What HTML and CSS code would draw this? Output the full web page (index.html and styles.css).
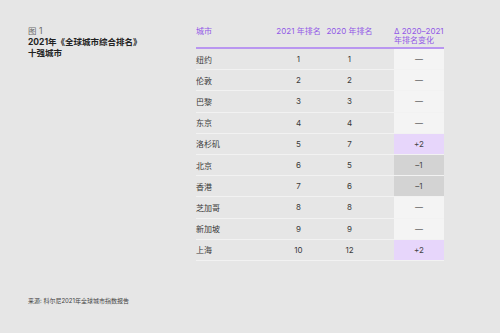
FILE: index.html
```html
<!DOCTYPE html>
<html lang="zh">
<head>
<meta charset="utf-8">
<link rel="stylesheet" href="styles.css">
</head>
<body>
<div class="page">
  <div class="main">
    <div class="caption">
      <div class="fig">图 1</div>
      <div class="title">2021年《全球城市综合排名》<br>十强城市</div>
    </div>
    <div class="table">
      <div class="row head">
        <div class="c city">城市</div>
        <div class="c num">2021 年排名</div>
        <div class="c num">2020 年排名</div>
        <div class="c delta">Δ 2020–2021<br>年排名变化</div>
      </div>
      <div class="row"><div class="c city">纽约</div><div class="c num">1</div><div class="c num">1</div><div class="c delta">—</div></div>
      <div class="row"><div class="c city">伦敦</div><div class="c num">2</div><div class="c num">2</div><div class="c delta">—</div></div>
      <div class="row"><div class="c city">巴黎</div><div class="c num">3</div><div class="c num">3</div><div class="c delta">—</div></div>
      <div class="row"><div class="c city">东京</div><div class="c num">4</div><div class="c num">4</div><div class="c delta">—</div></div>
      <div class="row"><div class="c city">洛杉矶</div><div class="c num">5</div><div class="c num">7</div><div class="c delta up">+2</div></div>
      <div class="row"><div class="c city">北京</div><div class="c num">6</div><div class="c num">5</div><div class="c delta down">–1</div></div>
      <div class="row"><div class="c city">香港</div><div class="c num">7</div><div class="c num">6</div><div class="c delta down">–1</div></div>
      <div class="row"><div class="c city">芝加哥</div><div class="c num">8</div><div class="c num">8</div><div class="c delta">—</div></div>
      <div class="row"><div class="c city">新加坡</div><div class="c num">9</div><div class="c num">9</div><div class="c delta">—</div></div>
      <div class="row"><div class="c city">上海</div><div class="c num">10</div><div class="c num">12</div><div class="c delta up">+2</div></div>
    </div>
  </div>
  <div class="source">来源: 科尔尼2021年全球城市指数报告</div>
</div>
</body>
</html>
```
FILE: styles.css
```css
html, body {
  margin: 0;
  padding: 0;
  background: #e6e6e6;
}
body {
  font-family: Inter, "Noto Sans CJK SC", sans-serif;
  color: #3a3a3a;
}
.page {
  box-sizing: border-box;
  height: 333px;
  padding: 26px 0 28px 28px;
  display: flex;
  flex-direction: column;
}
.main {
  display: flex;
  flex: 1;
}
.caption {
  width: 168px;
  font-size: 8.5px;
  line-height: 11px;
}
.fig {
  color: #6a6a6a;
}
.title {
  font-weight: 700;
  color: #222;
}
.table {
  margin-top: 1px;
  width: 248px;
}
.row {
  display: grid;
  grid-template-columns: 77px 51px 51px 69px;
  height: 21.2px;
  box-sizing: border-box;
  border-bottom: 1px solid #f2f2f2;
  font-size: 8px;
}
.row .c {
  display: flex;
  align-items: center;
}
.row .num {
  justify-content: center;
}
.row .delta {
  margin-left: 19px;
  justify-content: center;
  background: #f4f4f4;
  color: #555;
}
.row .delta.up {
  background: #e7d6fb;
  color: #444;
}
.row .delta.down {
  background: #d3d3d3;
  color: #444;
}
.row.head {
  height: auto;
  padding-bottom: 2px;
  border-bottom: 2px solid #b996f0;
  color: #9258e6;
  font-size: 8px;
  line-height: 9px;
}
.row.head .c {
  align-items: flex-start;
}
.row.head .delta {
  background: none;
  justify-content: flex-start;
  color: #9258e6;
}
.source {
  font-size: 6px;
  line-height: 8px;
  color: #444;
}
```
